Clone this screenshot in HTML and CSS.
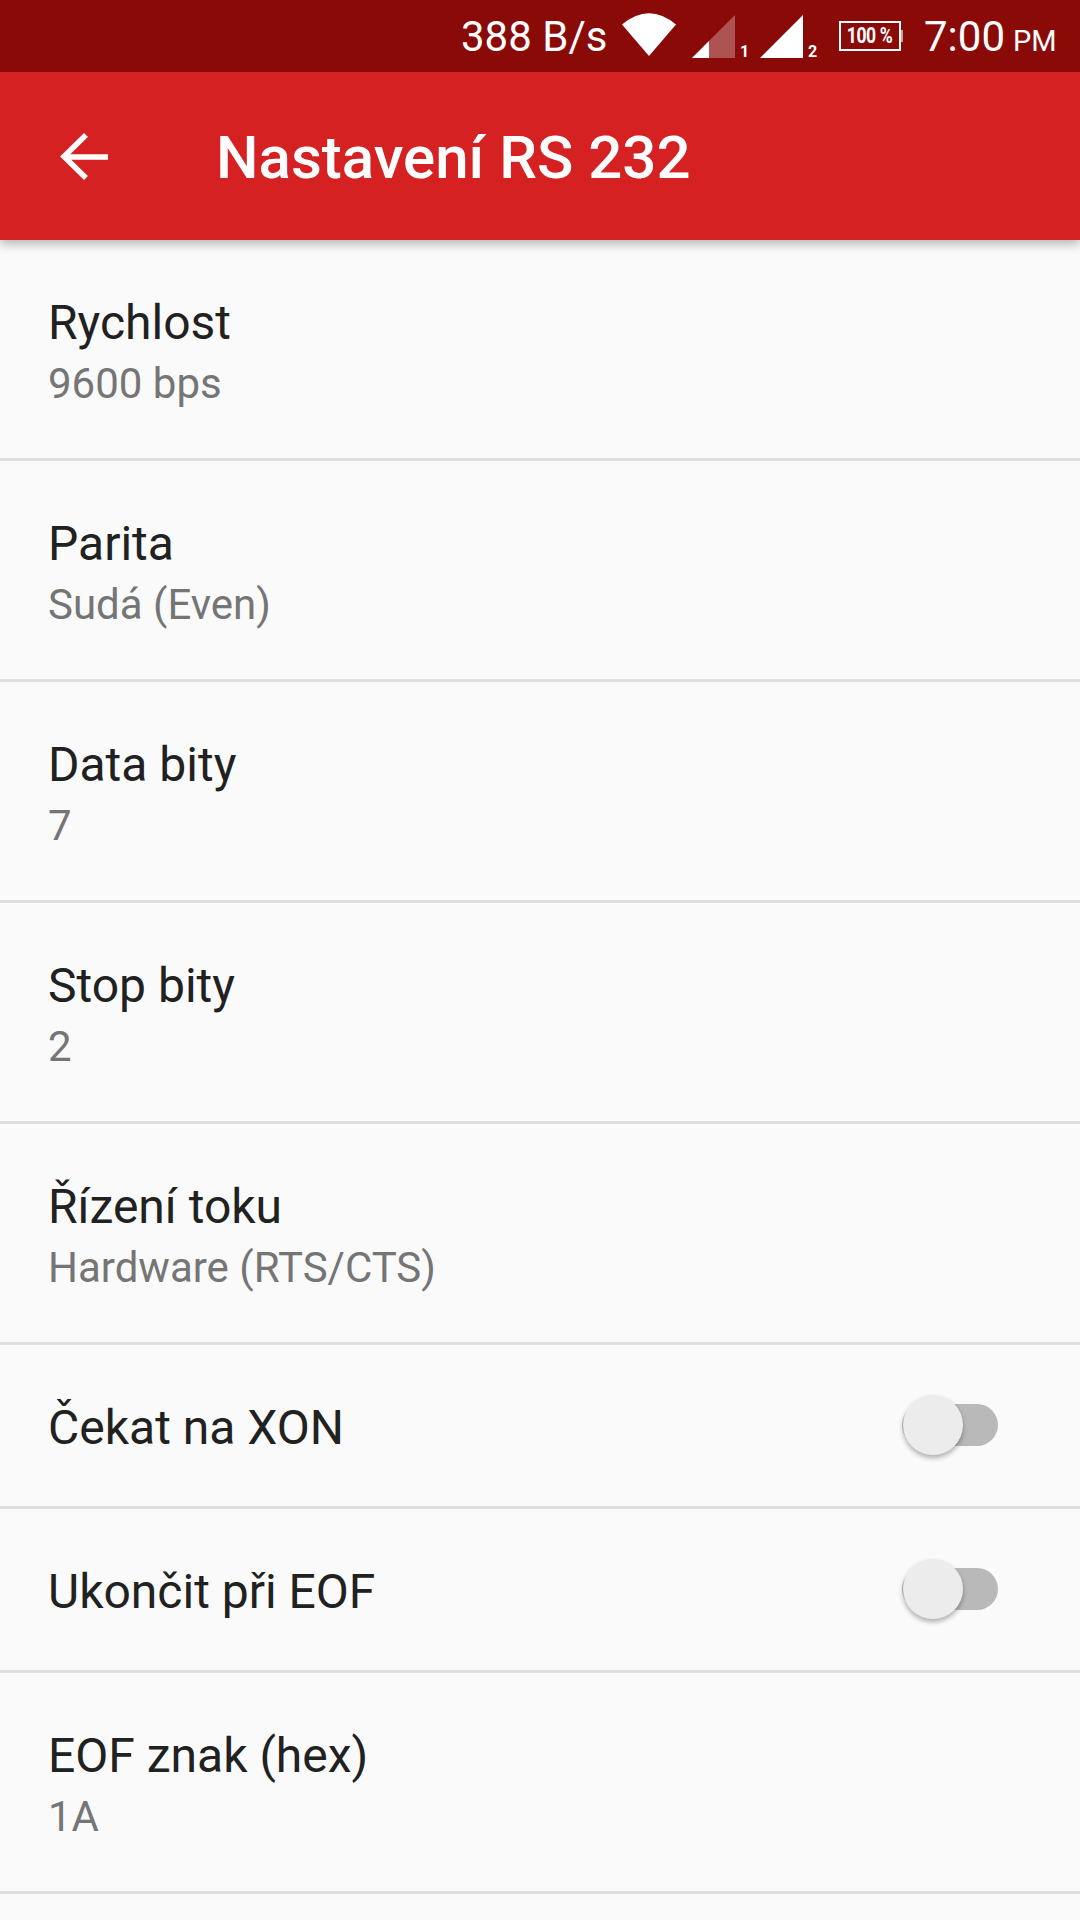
FILE: index.html
```html
<!DOCTYPE html>
<html lang="cs">
<head>
<meta charset="utf-8">
<title>Nastavení RS 232</title>
<link rel="stylesheet" href="styles.css">
</head>
<body>
<div class="screen">
  <header class="appbar">
    <div class="status">
      <span class="speed">388 B/s</span>
      <svg class="wifi" width="54" height="44" viewBox="0 0 54 44"><path fill="#fff" d="M0 11.500Q27 -11 54 11.500L27 43Z"/></svg>
      <span class="sim">
        <svg width="44" height="44" viewBox="0 0 44 44"><path fill="#fff" fill-opacity=".3" d="M43 1V44H0Z"/><path fill="#fff" d="M17 27V44H0Z"/></svg>
        <span class="sim-no">1</span>
      </span>
      <span class="sim">
        <svg width="44" height="44" viewBox="0 0 44 44"><path fill="#fff" d="M43 1V44H0Z"/></svg>
        <span class="sim-no">2</span>
      </span>
      <span class="battery"><span class="battery-level">100 %</span></span>
      <span class="clock">7:00<span class="ampm">PM</span></span>
    </div>
    <div class="toolbar">
      <svg class="back" width="48" height="47" viewBox="0 0 48 47"><path fill="none" stroke="#fff" stroke-width="5.500" d="M48 24H4M26 2L4 23.500L26 45"/></svg>
      <h1 class="title">Nastavení RS 232</h1>
    </div>
  </header>
  <main class="list">
    <div class="row"><div class="title-line">Rychlost</div><div class="summary">9600 bps</div></div>
    <div class="row"><div class="title-line">Parita</div><div class="summary">Sudá (Even)</div></div>
    <div class="row"><div class="title-line">Data bity</div><div class="summary">7</div></div>
    <div class="row"><div class="title-line">Stop bity</div><div class="summary">2</div></div>
    <div class="row"><div class="title-line">Řízení toku</div><div class="summary">Hardware (RTS/CTS)</div></div>
    <div class="row row-switch"><div class="title-line">Čekat na XON</div><span class="switch"><span class="thumb"></span></span></div>
    <div class="row row-switch"><div class="title-line">Ukončit při EOF</div><span class="switch"><span class="thumb"></span></span></div>
    <div class="row"><div class="title-line">EOF znak (hex)</div><div class="summary">1A</div></div>
  </main>
</div>
</body>
</html>
```
FILE: styles.css
```css
* { box-sizing: border-box; }
html, body { margin: 0; padding: 0; }
body { width: 1080px; height: 1920px; overflow: hidden; background: #fafafa; font-family: Roboto, "Noto Sans", sans-serif; }
.screen { display: flex; flex-direction: column; height: 1920px; overflow: hidden; }
.appbar { position: relative; z-index: 1; background: #d62122; box-shadow: 0 4px 10px rgba(0,0,0,.28); }
.status { height: 72px; background: #8a0a08; color: #fff; display: flex; align-items: center; padding-left: 461px; }
.speed { flex: none; font-size: 42px; width: 161px; white-space: nowrap; }
.wifi { flex: none; margin-right: 16px; margin-top: -2px; }
.sim { flex: none; display: flex; align-items: flex-end; width: 68px; margin-top: -1px; }
.sim svg { flex: none; }
.sim-no { font-size: 16px; font-weight: 700; line-height: 13px; margin-left: 4px; }
.battery { position: relative; flex: none; width: 62px; height: 30px; margin-left: 11px; border: 2px solid #fff; display: flex; align-items: center; justify-content: center; margin-top: -1px; }
.battery::after { content: ""; position: absolute; right: -4px; top: 7px; width: 2px; height: 12px; background: #fff; opacity: .6; }
.battery-level { font-size: 22px; font-weight: 700; letter-spacing: -.5px; transform: scaleX(.8); white-space: nowrap; }
.clock { flex: none; font-size: 42px; margin-left: 23px; white-space: nowrap; }
.ampm { font-size: 29px; margin-left: 8px; }
.toolbar { height: 168px; display: flex; align-items: center; padding-left: 60px; }
.back { flex: none; }
.title { margin: 2px 0 0 108px; font-size: 60px; font-weight: 500; color: #fff; white-space: nowrap; }
.list { flex: 1; }
.row { height: 221px; border-bottom: 3px solid #dedede; padding: 6px 48px 0; display: flex; flex-direction: column; justify-content: center; }
.row-switch { height: 164px; padding-top: 4px; flex-direction: row; align-items: center; justify-content: space-between; }
.title-line { font-size: 48px; line-height: 64px; color: #212121; white-space: nowrap; }
.summary { font-size: 42px; line-height: 58px; color: #757575; white-space: nowrap; }
.switch { position: relative; width: 96px; height: 42px; margin: -6px 34px 0 0; border-radius: 21px; background: #b9b9b9; }
.thumb { position: absolute; left: 1px; top: -9px; width: 60px; height: 60px; border-radius: 50%; background: #ececec; box-shadow: 0 3px 5px rgba(0,0,0,.3); }
```
